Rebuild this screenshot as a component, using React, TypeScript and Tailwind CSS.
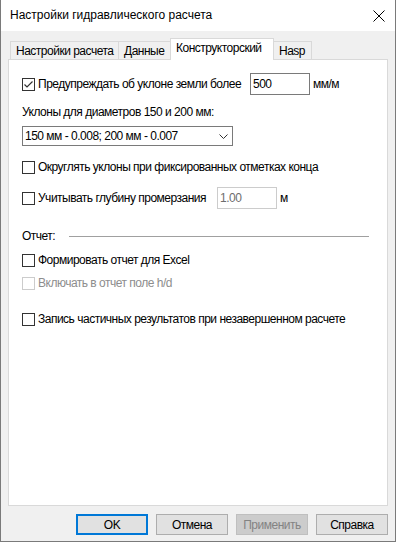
import React from 'react';

const font = { fontFamily: '"Liberation Sans", Arial, sans-serif' };

function CheckBox({ checked = false, disabled = false }: { checked?: boolean; disabled?: boolean }) {
  return (
    <span
      className={
        'flex h-[13px] w-[13px] shrink-0 items-center justify-center border bg-white ' +
        (disabled ? 'border-[#cccccc]' : 'border-[#333333]')
      }
    >
      {checked && (
        <svg width="11" height="11" viewBox="0 0 11 11">
          <polyline points="1.5,5.5 4,8 9.5,2.5" fill="none" stroke="#333" strokeWidth="1.2" />
        </svg>
      )}
    </span>
  );
}

function CheckRow({ label, checked, disabled, className }: { label: string; checked?: boolean; disabled?: boolean; className?: string }) {
  return (
    <div className={'flex h-[16px] items-center gap-[3px] ' + (className ?? '')}>
      <CheckBox checked={checked} disabled={disabled} />
      <span className={disabled ? 'text-[#8d8d8d]' : 'text-black'}>{label}</span>
    </div>
  );
}

function Tab({ label, active, className }: { label: string; active?: boolean; className?: string }) {
  return (
    <div
      className={
        'flex items-center border border-b-0 px-[5px] ' +
        (active
          ? 'relative z-10 -mb-px h-[22px] border-[#d9d9d9] bg-white pb-[3px]'
          : 'h-[18px] border-[#d9d9d9] bg-[#f0f0f0]') +
        ' ' +
        (className ?? '')
      }
    >
      {label}
    </div>
  );
}

function Button({ label, primary, disabled }: { label: string; primary?: boolean; disabled?: boolean }) {
  return (
    <div
      className={
        'flex h-[21px] w-[72px] items-center justify-center ' +
        (primary
          ? 'border-2 border-[#0078d7] bg-[#e1e1e1] text-black'
          : disabled
          ? 'border border-[#bfbfbf] bg-[#cccccc] text-[#838383]'
          : 'border border-[#adadad] bg-[#e1e1e1] text-black')
      }
    >
      {label}
    </div>
  );
}

export default function App() {
  return (
    <div className="h-[545px] w-[396px] whitespace-nowrap bg-white text-[12px] leading-none tracking-[-0.5px]" style={font}>
      <div className="flex h-[542px] flex-col border border-t-0 border-[#7a7a7a]">
        {/* title bar */}
        <div className="flex h-[31px] items-center justify-between bg-white pl-[9px] pr-[9px]">
          <span className="-mt-px text-[12px] tracking-normal text-black">Настройки гидравлического расчета</span>
          <svg width="12" height="12" viewBox="0 0 12 12" className="mr-px">
            <path d="M0.5 0.5 L11.5 11.5 M11.5 0.5 L0.5 11.5" stroke="#000" strokeWidth="1" />
          </svg>
        </div>

        <div className="flex flex-1 flex-col bg-[#f0f0f0] pl-[7px] pr-[7px]">
          {/* tabs */}
          <div className="mt-[7px] flex items-end pl-[2px]">
            <Tab label="Настройки расчета" className="w-[109px]" />
            <Tab label="Данные" className="-ml-px w-[53px]" />
            <Tab label="Конструкторский" active className="-ml-px w-[104px]" />
            <Tab label="Hasp" className="-ml-px w-[39px]" />
          </div>

          {/* panel */}
          <div className="flex h-[447px] flex-col border border-[#d9d9d9] bg-white pl-[13px] pt-[13px]">
            <div className="flex h-[22px] items-center">
              <div className="flex w-[228px] items-center gap-[3px]">
                <CheckBox checked />
                <span>Предупреждать об уклоне земли более</span>
              </div>
              <div className="flex h-[22px] w-[60px] items-center border border-[#7a7a7a] pl-[2px]">500</div>
              <span className="ml-[3px]">мм/м</span>
            </div>

            <div className="mt-[9px] flex h-[16px] items-center">Уклоны для диаметров 150 и 200 мм:</div>

            <div className="mt-[6px] flex h-[20px] w-[211px] items-center justify-between border border-[#7a7a7a] pl-[2px] pr-[4px]">
              <span>150 мм - 0.008; 200 мм - 0.007</span>
              <svg width="9" height="5" viewBox="0 0 9 5">
                <polyline points="0.5,0.5 4.5,4.5 8.5,0.5" fill="none" stroke="#333" strokeWidth="1" />
              </svg>
            </div>

            <CheckRow label="Округлять уклоны при фиксированных отметках конца" className="mt-[13px]" />

            <div className="mt-[12px] flex h-[22px] items-center">
              <div className="flex w-[195px] items-center gap-[3px]">
                <CheckBox />
                <span>Учитывать глубину промерзания</span>
              </div>
              <div className="flex h-[22px] w-[60px] items-center border border-[#cccccc] pl-[2px] text-[#6d6d6d]">1.00</div>
              <span className="ml-[3px]">м</span>
            </div>

            <div className="mt-[19px] flex h-[16px] items-center">
              <span className="w-[47px]">Отчет:</span>
              <div className="h-px w-[300px] bg-[#a0a0a0]" />
            </div>

            <CheckRow label="Формировать отчет для Excel" className="mt-[8px]" />
            <CheckRow label="Включать в отчет поле h/d" disabled className="mt-[7px]" />
            <CheckRow label="Запись частичных результатов при незавершенном расчете" className="mt-[20px]" />
          </div>

          {/* buttons */}
          <div className="mt-[8px] flex justify-end gap-[8px]">
            <Button label="OK" primary />
            <Button label="Отмена" />
            <Button label="Применить" disabled />
            <Button label="Справка" />
          </div>
        </div>
      </div>
    </div>
  );
}
